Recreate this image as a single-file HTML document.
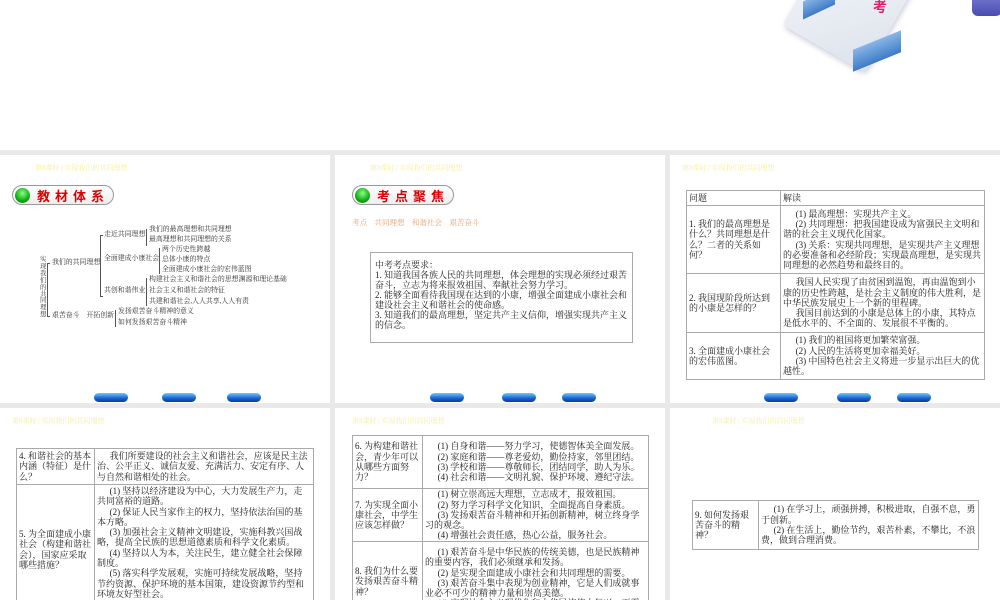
<!DOCTYPE html>
<html><head><meta charset="utf-8"><style>
*{margin:0;padding:0;box-sizing:border-box}
body{width:1000px;height:600px;overflow:hidden;background:#e9e9e9;position:relative;font-family:"Liberation Serif","Noto Serif CJK SC",serif;color:#222}
.top{position:absolute;left:0;top:0;width:1000px;height:150px;background:#fff;overflow:hidden}
.s{position:absolute;background:#fff;overflow:hidden}
.a{position:absolute;white-space:nowrap}
.hd{position:absolute;font-size:7px;color:#f5f0a0;white-space:nowrap}
.pill{position:absolute;width:102px;height:20px;border:1px solid #999;border-radius:10px;background:linear-gradient(#fff,#eee);}
.pill .b{position:absolute;left:2px;top:2px;width:15px;height:15px;border-radius:50%;background:radial-gradient(circle at 50% 35%,#8f8,#1a1 60%,#070)}
.pill .t{position:absolute;left:24px;top:1px;font-size:13px;line-height:17px;color:#d00;letter-spacing:5px;white-space:nowrap;font-family:"Noto Sans CJK SC",sans-serif;font-weight:bold}
.btn{position:absolute;width:34px;height:9px;border-radius:5px;background:linear-gradient(#6cf,#1a5fd0 60%,#0a3a9a)}
.m{font-size:6.9px;color:#333;line-height:8px}
table{position:absolute;border-collapse:collapse;font-size:9px;line-height:10.3px;color:#222}
td{border:1px solid #aaa;vertical-align:middle;padding:0 2px}
td p{text-indent:1.4em}
</style></head><body>
<div class="top">
 <div style="position:absolute;left:800px;top:-40px;width:95px;height:95px;transform:rotate(30deg);background:linear-gradient(135deg,#f4f6fa,#dde3ec);border-radius:6px;box-shadow:2px 2px 6px #ccd"></div>
 <div style="position:absolute;left:803px;top:-6px;width:32px;height:18px;background:linear-gradient(#8ab6e6,#3d7cc8);transform:skewY(-25deg)"></div>
 <div style="position:absolute;left:853px;top:40px;width:48px;height:22px;background:linear-gradient(#8ab6e6,#3d7cc8);transform:skewY(-22deg)"></div>
 <div style="position:absolute;left:972px;top:-8px;width:30px;height:24px;border-radius:6px;background:linear-gradient(#7b7fd6,#4a4cb0)"></div>
 <div class="a" style="left:873px;top:-3px;font-size:14px;color:#e0206a;font-weight:bold;font-family:'Noto Sans CJK SC',sans-serif">考</div>
</div>

<!-- slide 1 -->
<div class="s" style="left:0;top:155px;width:330px;height:248px">
 <div class="hd" style="left:35px;top:8px">第8课时 | 实现我们的共同理想</div>
 <div class="pill" style="left:12px;top:30px"><div class="b"></div><div class="t">教材体系</div></div>
 <div class="a m" style="left:40px;top:102px;width:7px;white-space:normal;line-height:6.9px;font-size:6.4px">实现我们的共同理想</div>
 <div class="a" style="left:47px;top:108px;width:3px;height:54px;border:0.6px solid #555;border-right:none"></div>
 <div class="a m" style="left:52px;top:104px">我们的共同理想</div>
 <div class="a m" style="left:52px;top:157px">艰苦奋斗　开拓创新</div>
 <div class="a" style="left:100px;top:80px;width:3px;height:62px;border:0.6px solid #555;border-right:none"></div>
 <div class="a m" style="left:104px;top:76px">走近共同理想</div>
 <div class="a m" style="left:104px;top:100px">全面建成小康社会</div>
 <div class="a m" style="left:104px;top:132px">共创和谐伟业</div>
 <div class="a" style="left:146px;top:74px;width:2px;height:17px;border-left:0.6px solid #555"></div>
 <div class="a m" style="left:149px;top:71px">我们的最高理想和共同理想</div>
 <div class="a m" style="left:149px;top:81px">最高理想和共同理想的关系</div>
 <div class="a" style="left:159px;top:93px;width:2px;height:26px;border-left:0.6px solid #555"></div>
 <div class="a m" style="left:162px;top:91px">两个历史性跨越</div>
 <div class="a m" style="left:162px;top:101px">总体小康的特点</div>
 <div class="a m" style="left:162px;top:111px">全面建成小康社会的宏伟蓝图</div>
 <div class="a" style="left:146px;top:123px;width:2px;height:28px;border-left:0.6px solid #555"></div>
 <div class="a m" style="left:149px;top:121px">构建社会主义和谐社会的思想渊源和理论基础</div>
 <div class="a m" style="left:149px;top:132px">社会主义和谐社会的特征</div>
 <div class="a m" style="left:149px;top:143px">共建和谐社会,人人共享,人人有责</div>
 <div class="a" style="left:115px;top:155px;width:2px;height:17px;border-left:0.6px solid #555"></div>
 <div class="a m" style="left:118px;top:153px">发扬艰苦奋斗精神的意义</div>
 <div class="a m" style="left:118px;top:164px">如何发扬艰苦奋斗精神</div>
 <div class="btn" style="left:94px;top:238px"></div><div class="btn" style="left:162px;top:238px"></div><div class="btn" style="left:227px;top:238px"></div>
</div>

<!-- slide 2 -->
<div class="s" style="left:335px;top:155px;width:330px;height:248px">
 <div class="hd" style="left:35px;top:8px">第8课时 | 实现我们的共同理想</div>
 <div class="pill" style="left:17px;top:30px"><div class="b"></div><div class="t">考点聚焦</div></div>
 <div class="a" style="left:17px;top:62px;font-size:7.5px;color:#e8a070">考点　共同理想　和谐社会　艰苦奋斗</div>
 <div class="a" style="left:35px;top:97px;width:263px;height:91px;border:1px solid #aaa;white-space:normal;font-size:9px;line-height:10px;padding:7px 4px 0 4px;color:#222">中考考点要求：<br>1. 知道我国各族人民的共同理想，体会理想的实现必须经过艰苦奋斗，立志为将来报效祖国、奉献社会努力学习。<br>2. 能够全面看待我国现在达到的小康，增强全面建成小康社会和建设社会主义和谐社会的使命感。<br>3. 知道我们的最高理想，坚定共产主义信仰，增强实现共产主义的信念。</div>
 <div class="btn" style="left:95px;top:238px"></div><div class="btn" style="left:167px;top:238px"></div><div class="btn" style="left:227px;top:238px"></div>
</div>

<!-- slide 3 -->
<div class="s" style="left:670px;top:155px;width:330px;height:248px">
 <div class="hd" style="left:12px;top:8px">第8课时 | 实现我们的共同理想</div>
 <table style="left:16px;top:35px;width:299px">
  <tr style="height:15px"><td style="width:94px">问题</td><td>解读</td></tr>
  <tr style="height:68px"><td>1. 我们的最高理想是什么？共同理想是什么？二者的关系如何？</td><td><p>(1) 最高理想：实现共产主义。</p><p>(2) 共同理想：把我国建设成为富强民主文明和谐的社会主义现代化国家。</p><p>(3) 关系：实现共同理想，是实现共产主义理想的必要准备和必经阶段；实现最高理想，是实现共同理想的必然趋势和最终目的。</p></td></tr>
  <tr style="height:59px"><td>2. 我国现阶段所达到的小康是怎样的？</td><td><p>我国人民实现了由贫困到温饱，再由温饱到小康的历史性跨越，是社会主义制度的伟大胜利，是中华民族发展史上一个新的里程碑。</p><p>我国目前达到的小康是总体上的小康，其特点是低水平的、不全面的、发展很不平衡的。</p></td></tr>
  <tr style="height:47px"><td>3. 全面建成小康社会的宏伟蓝图。</td><td><p>(1) 我们的祖国将更加繁荣富强。</p><p>(2) 人民的生活将更加幸福美好。</p><p>(3) 中国特色社会主义将进一步显示出巨大的优越性。</p></td></tr>
 </table>
 <div class="btn" style="left:94px;top:238px"></div><div class="btn" style="left:167px;top:238px"></div><div class="btn" style="left:227px;top:238px"></div>
</div>

<!-- slide 4 -->
<div class="s" style="left:0;top:408px;width:330px;height:192px">
 <div class="hd" style="left:12px;top:8px">第8课时 | 实现我们的共同理想</div>
 <table style="left:16px;top:40px;width:298px">
  <tr style="height:36px"><td style="width:78px">4. 和谐社会的基本内涵（特征）是什么？</td><td><p>我们所要建设的社会主义和谐社会，应该是民主法治、公平正义、诚信友爱、充满活力、安定有序、人与自然和谐相处的社会。</p></td></tr>
  <tr style="height:130px"><td>5. 为全面建成小康社会（构建和谐社会），国家应采取哪些措施？</td><td style="vertical-align:top;padding-top:1px"><p>(1) 坚持以经济建设为中心，大力发展生产力，走共同富裕的道路。</p><p>(2) 保证人民当家作主的权力，坚持依法治国的基本方略。</p><p>(3) 加强社会主义精神文明建设，实施科教兴国战略，提高全民族的思想道德素质和科学文化素质。</p><p>(4) 坚持以人为本，关注民生，建立健全社会保障制度。</p><p>(5) 落实科学发展观，实施可持续发展战略，坚持节约资源、保护环境的基本国策，建设资源节约型和环境友好型社会。</p></td></tr>
 </table>
</div>

<!-- slide 5 -->
<div class="s" style="left:335px;top:408px;width:330px;height:192px">
 <div class="hd" style="left:17px;top:8px">第8课时 | 实现我们的共同理想</div>
 <table style="left:17px;top:27px;width:297px">
  <tr style="height:53px"><td style="width:70px">6. 为构建和谐社会，青少年可以从哪些方面努力？</td><td><p>(1) 自身和谐——努力学习，使德智体美全面发展。</p><p>(2) 家庭和谐——尊老爱幼，勤俭持家，邻里团结。</p><p>(3) 学校和谐——尊敬师长，团结同学，助人为乐。</p><p>(4) 社会和谐——文明礼貌、保护环境、遵纪守法。</p></td></tr>
  <tr style="height:53px"><td>7. 为实现全面小康社会，中学生应该怎样做？</td><td><p>(1) 树立崇高远大理想，立志成才，报效祖国。</p><p>(2) 努力学习科学文化知识，全面提高自身素质。</p><p>(3) 发扬艰苦奋斗精神和开拓创新精神，树立终身学习的观念。</p><p>(4) 增强社会责任感，热心公益，服务社会。</p></td></tr>
  <tr style="height:80px"><td>8. 我们为什么要发扬艰苦奋斗精神？</td><td style="vertical-align:top;padding-top:5px"><p>(1) 艰苦奋斗是中华民族的传统美德，也是民族精神的重要内容，我们必须继承和发扬。</p><p>(2) 是实现全面建成小康社会和共同理想的需要。</p><p>(3) 艰苦奋斗集中表现为创业精神，它是人们成就事业必不可少的精神力量和崇高美德。</p><p>(4) 实现社会主义现代化和中华民族伟大复兴，更需要艰苦奋斗。</p></td></tr>
 </table>
</div>

<!-- slide 6 -->
<div class="s" style="left:670px;top:408px;width:330px;height:192px">
 <div class="hd" style="left:42px;top:8px">第8课时 | 实现我们的共同理想</div>
 <table style="left:22px;top:92px;width:287px">
  <tr style="height:49px"><td style="width:66px">9. 如何发扬艰苦奋斗的精神？</td><td><p>(1) 在学习上，顽强拼搏，积极进取，自强不息，勇于创新。</p><p>(2) 在生活上，勤俭节约，艰苦朴素，不攀比，不浪费，做到合理消费。</p></td></tr>
 </table>
</div>
</body></html>
